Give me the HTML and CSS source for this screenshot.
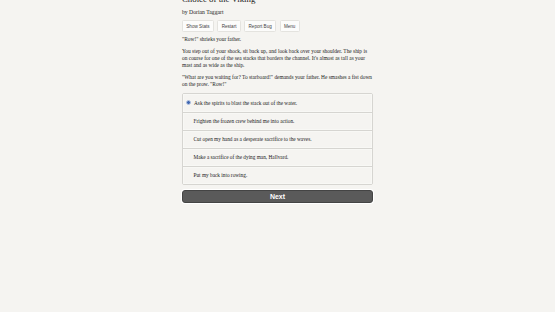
FILE: index.html
```html
<!DOCTYPE html>
<html>
<head>
<meta charset="utf-8">
<link rel="stylesheet" href="styles.css">
</head>
<body>
<div class="page">
  <h1 class="title">Choice of the Viking</h1>
  <div class="author">by Dorian Taggart</div>
  <div class="buttons">
    <button class="btn">Show Stats</button>
    <button class="btn">Restart</button>
    <button class="btn">Report Bug</button>
    <button class="btn">Menu</button>
  </div>
  <p class="para first">"Row!" shrieks your father.</p>
  <p class="para">You step out of your shock, sit back up, and look back over your shoulder. The ship is on course for one of the sea stacks that borders the channel. It's almost as tall as your mast and as wide as the ship.</p>
  <p class="para">"What are you waiting for? To starboard!" demands your father. He smashes a fist down on the prow. "Row!"</p>
  <div class="choices">
    <div class="choice selected"><span class="radio"></span>Ask the spirits to blast the stack out of the water.</div>
    <div class="choice">Frighten the frozen crew behind me into action.</div>
    <div class="choice">Cut open my hand as a desperate sacrifice to the waves.</div>
    <div class="choice">Make a sacrifice of the dying man, Hallvard.</div>
    <div class="choice">Put my back into rowing.</div>
  </div>
  <button class="next">Next</button>
</div>
</body>
</html>
```
FILE: styles.css
```css
html, body {
  margin: 0;
  padding: 0;
  background: #f5f4f1;
  height: 100%;
}
.page {
  width: 191px;
  margin: 0 auto 0 182px;
  font-family: "Liberation Serif", "Times New Roman", serif;
  color: #222;
  display: flex;
  flex-direction: column;
}
.title {
  font-size: 8.8px;
  font-weight: normal;
  margin: -6px 0 0 0;
  line-height: 10px;
  color: #1a1a1a;
}
.author {
  font-size: 5.7px;
  line-height: 7px;
  margin-top: 5px;
  color: #222;
}
.buttons {
  display: flex;
  gap: 3.5px;
  margin-top: 4px;
}
.btn {
  font-family: "Liberation Sans", Arial, sans-serif;
  font-size: 4.6px;
  line-height: 5px;
  padding: 2.5px 3.3px;
  background: #fcfcfb;
  border: 0.5px solid #e4e3df;
  border-radius: 1.5px;
  color: #444;
  margin: 0;
}
.para {
  font-size: 5.4px;
  line-height: 7px;
  margin: 5px 0 0 0;
  color: #222;
}
.para.first {
  margin-top: 4px;
}
.choices {
  margin-top: 5px;
  border: 0.6px solid #d6d5d1;
  border-radius: 2px;
  background: #f5f4f1;
  display: flex;
  flex-direction: column;
}
.choice {
  height: 18px;
  box-sizing: border-box;
  display: flex;
  align-items: center;
  padding-left: 10.5px;
  font-size: 5.3px;
  color: #222;
  border-top: 0.6px solid #d6d5d1;
  box-shadow: inset 0 0 0 0.5px #fbfbfa;
}
.choice:first-child {
  border-top: none;
  height: 17.6px;
}
.choice.selected {
  padding-left: 3px;
}
.radio {
  width: 5px;
  height: 5px;
  border-radius: 50%;
  background: #3f66b0;
  border: 0.8px solid #b7c6e3;
  box-sizing: border-box;
  margin-right: 3px;
  flex: none;
}
.next {
  margin-top: 5px;
  height: 13px;
  background: #5a5a5a;
  border: 0.6px solid #444;
  border-radius: 3px;
  color: #fff;
  font-family: "Liberation Sans", Arial, sans-serif;
  font-weight: bold;
  font-size: 7px;
  padding: 0;
  box-shadow: 0 0 0 1px #ffffff;
}
```
